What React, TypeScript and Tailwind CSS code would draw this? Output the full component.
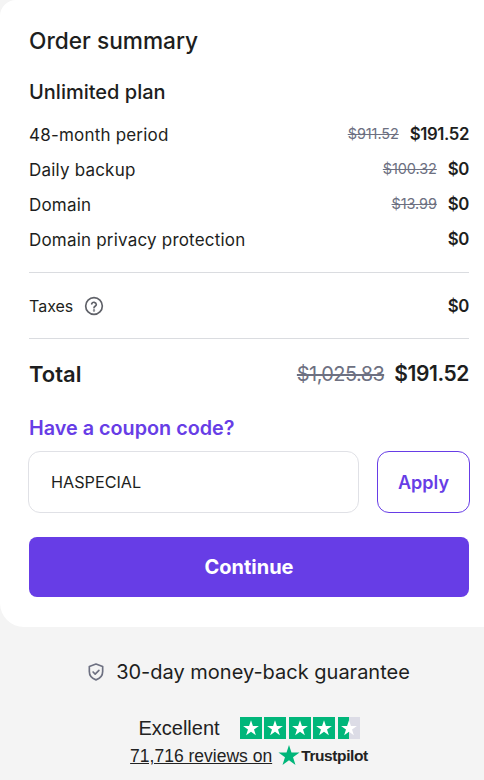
const items = [
  { name: '48-month period', old: '$911.52', price: '$191.52' },
  { name: 'Daily backup', old: '$100.32', price: '$0' },
  { name: 'Domain', old: '$13.99', price: '$0' },
  { name: 'Domain privacy protection', old: '', price: '$0' },
]

const font = "font-['Inter',sans-serif]"

function TpStar({ half }: { half?: boolean }) {
  return (
    <div className={`relative w-[22px] h-[22px] ${half ? 'bg-[#dcdce6]' : 'bg-[#00b67a]'}`}>
      {half && <div className="absolute left-0 top-0 h-full w-[11px] bg-[#00b67a]" />}
      <svg viewBox="0 0 24 24" className="absolute inset-0 w-full h-full">
        <path fill="#fff" d="M12 3.600l2.100 6.200h6.500l-5.300 3.800 2 6.200-5.300-3.800-5.300 3.800 2-6.200-5.300-3.800h6.500z" />
      </svg>
    </div>
  )
}

export default function App() {
  return (
    <div className={`w-[484px] h-[780px] overflow-hidden bg-[#f4f4f4] text-[#1d1e20] ${font}`}>
      <div className="h-[627px] bg-white rounded-tl-2xl rounded-bl-3xl pl-[29px] pr-[15px] pt-[24px]">
        <h2 className="text-[22.700px] leading-[33px] font-medium">Order summary</h2>
        <h3 className="mt-[21px] mb-[16px] text-[20px] leading-[28px] font-medium">Unlimited plan</h3>
        <div className="flex flex-col gap-[11px]">
          {items.map((item) => (
            <div key={item.name} className="flex justify-between items-center h-[24px] leading-[24px] text-[17px] tracking-[0.2px]">
              <span className="pt-px">{item.name}</span>
              <div className="flex items-center gap-[11px]">
                {item.old && <span className="text-[14.500px] tracking-[-0.100px] text-[#6d7081] line-through">{item.old}</span>}
                <span className="font-semibold text-[16.800px] tracking-[-0.400px]">{item.price}</span>
              </div>
            </div>
          ))}
        </div>
        <div className="mt-[21px] border-t border-[#dadce0]" />
        <div className="h-[65px] flex justify-between items-center text-[16px] leading-[24px]">
          <div className="flex items-center gap-[11px]">
            <span>Taxes</span>
            <svg viewBox="0 0 24 24" className="w-[20px] h-[20px]" fill="none" stroke="#5f6168" strokeWidth="2" strokeLinecap="round">
              <circle cx="12" cy="12" r="10" />
              <path d="M9.200 9.400a2.900 2.900 0 0 1 5.600.8c0 1.900-2.800 2.300-2.800 4" />
              <circle cx="12" cy="17.300" r="0.400" fill="#5f6168" />
            </svg>
          </div>
          <span className="font-semibold text-[16.800px] tracking-[-0.400px] pt-px">$0</span>
        </div>
        <div className="border-t border-[#dadce0]" />
        <div className="mt-[19px] h-[32px] flex justify-between items-center leading-[32px]">
          <span className="text-[22px] font-semibold">Total</span>
          <div className="flex items-center gap-[10px]">
            <span className="text-[20px] tracking-[-0.600px] text-[#6d7081] line-through">$1,025.83</span>
            <span className="text-[21px] font-semibold tracking-[-0.400px]">$191.52</span>
          </div>
        </div>
        <div className="mt-[24px] h-[28px] leading-[28px] text-[#673de6] text-[19.800px] font-semibold">Have a coupon code?</div>
        <div className="mt-[9px] flex gap-[18px]">
          <div className="w-[331px] shrink-0 h-[62px] -ml-px border border-[#e0e1e6] rounded-xl flex items-center pl-[22px] text-[16.200px]">
            HASPECIAL
          </div>
          <button className="w-[93px] shrink-0 h-[62px] border border-[#673de6] rounded-xl text-[#673de6] font-semibold text-[18px] flex items-center justify-center">
            Apply
          </button>
        </div>
        <button className="mt-[24px] w-[440px] h-[60px] bg-[#673de6] rounded-lg text-white font-bold text-[20px]">
          Continue
        </button>
      </div>
      <div className="mt-[32px] h-[26px] flex items-center justify-center gap-[10px] text-[20px] pl-[12px]">
        <svg viewBox="0 0 24 24" className="w-[20px] h-[20px]" fill="none" stroke="#6d7081" strokeWidth="2" strokeLinecap="round" strokeLinejoin="round">
          <path d="M12 2.500l8 3v6c0 5-3.400 8.500-8 10-4.600-1.500-8-5-8-10v-6z" />
          <path d="M8.500 12l2.500 2.500 4.500-4.500" />
        </svg>
        <span>30-day money-back guarantee</span>
      </div>
      <div className="mt-[31px] flex items-center justify-center gap-[20px] h-[24px] pl-[14px] font-['Liberation_Sans',sans-serif]">
        <span className="text-[20px] text-[#222]">Excellent</span>
        <div className="flex gap-[2.500px]">
          <TpStar />
          <TpStar />
          <TpStar />
          <TpStar />
          <TpStar half />
        </div>
      </div>
      <div className="mt-[3px] flex items-center justify-center h-[26px] pl-[14px] font-['Liberation_Sans',sans-serif]">
        <span className="text-[17.500px] underline text-[#222]">71,716 reviews on</span>
        <svg viewBox="0 0 24 24" className="w-[22px] h-[22px] ml-[6px] mb-[3px]">
          <path fill="#00b67a" d="M12 1l2.700 8.300h8.800l-7.100 5.200 2.700 8.400-7.100-5.200-7.100 5.200 2.700-8.400L.5 9.300h8.800z" />
        </svg>
        <span className="text-[15.500px] font-semibold text-[#222] tracking-tight ml-[1px]">Trustpilot</span>
      </div>
    </div>
  )
}
